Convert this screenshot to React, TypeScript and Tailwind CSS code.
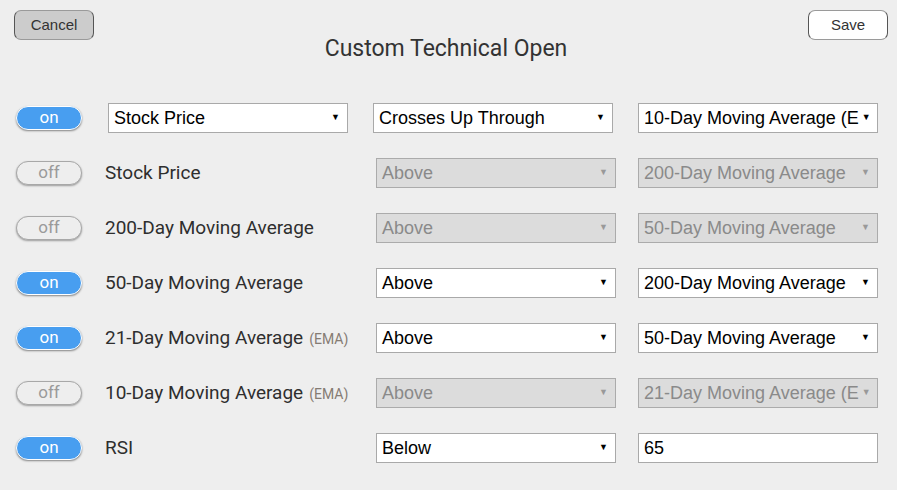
import React from "react";

const sans = { fontFamily: "Roboto, 'Noto Sans', sans-serif" };
const arial = { fontFamily: "'Liberation Sans', Arial, sans-serif" };

function Toggle({ on }: { on: boolean }) {
  return on ? (
    <div
      className="w-[66px] h-[24px] rounded-full bg-[#489ef0] border border-white shadow-[0_1px_2px_rgba(0,0,0,0.45)] flex items-center justify-center text-white text-[17px] leading-none"
      style={sans}
    >
      on
    </div>
  ) : (
    <div
      className="w-[66px] h-[24px] rounded-full bg-[#eeeeee] border border-[#a8a8a8] shadow-[0_1px_2px_rgba(0,0,0,0.35)] flex items-center justify-center text-[#9a9a9a] text-[17px] leading-none"
      style={sans}
    >
      off
    </div>
  );
}

function Select({
  value,
  disabled,
  className = "",
  arrow = true,
}: {
  value: string;
  disabled?: boolean;
  className?: string;
  arrow?: boolean;
}) {
  return (
    <div
      className={
        "w-[240px] h-[30px] border flex items-center pl-[5px] pr-[7px] text-[18px] leading-none " +
        (disabled
          ? "bg-[#dcdcdc] border-[#ababab] text-[#8a8a8a] "
          : "bg-white border-[#a9a9a9] text-black ") +
        className
      }
      style={arial}
    >
      <span className="whitespace-nowrap">{value}</span>
      {arrow && (
        <span
          className={
            "text-[9px] ml-auto pl-[3px] shrink-0 " +
            (disabled ? "text-[#999]" : "text-black")
          }
        >
          ▼
        </span>
      )}
    </div>
  );
}

function Label({ text, ema }: { text: string; ema?: boolean }) {
  return (
    <div
      className="w-[271px] text-[19px] text-[#2e2e2e] whitespace-nowrap leading-none"
      style={sans}
    >
      {text}
      {ema && (
        <span className="text-[14px] text-[#857b73] ml-[6px]">(EMA)</span>
      )}
    </div>
  );
}

type Row = {
  on: boolean;
  label: string;
  ema?: boolean;
  op: string;
  target: string;
  input?: boolean;
};

const rows: Row[] = [
  { on: false, label: "Stock Price", op: "Above", target: "200-Day Moving Average" },
  { on: false, label: "200-Day Moving Average", op: "Above", target: "50-Day Moving Average" },
  { on: true, label: "50-Day Moving Average", op: "Above", target: "200-Day Moving Average" },
  { on: true, label: "21-Day Moving Average", ema: true, op: "Above", target: "50-Day Moving Average" },
  { on: false, label: "10-Day Moving Average", ema: true, op: "Above", target: "21-Day Moving Average (E" },
  { on: true, label: "RSI", op: "Below", target: "65", input: true },
];

export default function App() {
  return (
    <div className="w-[897px] h-[490px] bg-[#eeeeee] overflow-hidden">
      <div className="relative h-[90px]">
        <div className="flex justify-between pt-[10px] pl-[14px] pr-[9px]">
          <button
            className="w-[80px] h-[30px] rounded-[7px] bg-[#cccccc] border border-[#9a9a9a] border-x-[#555] text-[15px] text-[#333]"
            style={arial}
          >
            Cancel
          </button>
          <button
            className="w-[80px] h-[30px] rounded-[7px] bg-white border border-[#9a9a9a] border-x-[#555] text-[15px] text-[#333]"
            style={arial}
          >
            Save
          </button>
        </div>
        <div
          className="absolute left-0 right-0 top-[32px] text-center text-[23px] text-[#333] pr-[5px]"
          style={sans}
        >
          Custom Technical Open
        </div>
      </div>

      <div className="flex flex-col">
        <div className="h-[55px] flex items-center pl-[16px]">
          <Toggle on />
          <Select value="Stock Price" className="ml-[26px]" />
          <Select value="Crosses Up Through" className="ml-[25px]" />
          <Select value="10-Day Moving Average (E" className="ml-[25px]" />
        </div>
        {rows.map((r, i) => (
          <div key={i} className="h-[55px] flex items-center pl-[16px]">
            <Toggle on={r.on} />
            <div className="ml-[23px]">
              <Label text={r.label} ema={r.ema} />
            </div>
            <Select value={r.op} disabled={!r.on} />
            <Select
              value={r.target}
              disabled={!r.on}
              arrow={!r.input}
              className="ml-[22px]"
            />
          </div>
        ))}
      </div>
    </div>
  );
}
